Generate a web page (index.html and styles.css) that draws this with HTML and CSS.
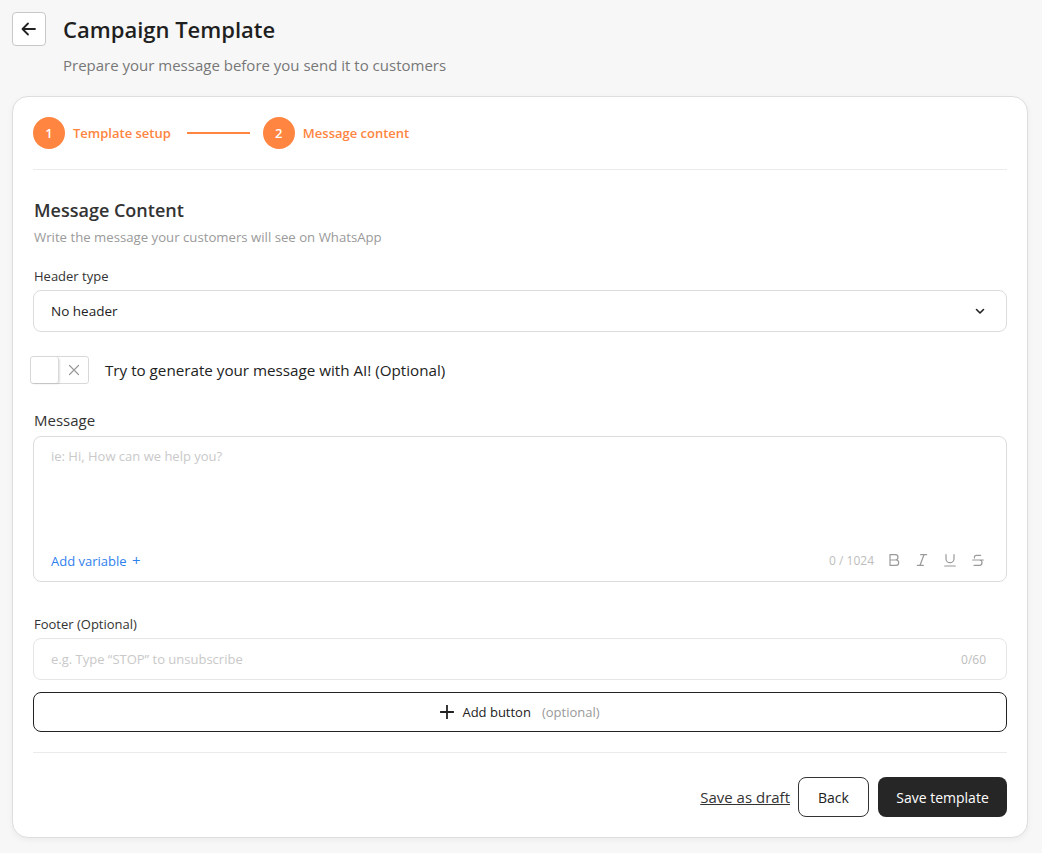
FILE: index.html
```html
<!DOCTYPE html>
<html lang="en">
<head>
  <meta charset="UTF-8" />
  <meta name="viewport" content="width=device-width,initial-scale=1.0" />
  <title>Campaign Template</title>
  <link rel="stylesheet" href="styles.css">
</head>
<body>
  <header class="page-head">
    <button class="back-btn" type="button" aria-label="Back">
      <svg width="20" height="20" viewBox="0 0 20 20" fill="none" stroke="#222" stroke-width="1.8" stroke-linecap="round" stroke-linejoin="round">
        <path d="M16 10H4M9 4.5L3.5 10L9 15.5" />
      </svg>
    </button>
    <div class="head-text">
      <h1>Campaign Template</h1>
      <p class="sub">Prepare your message before you send it to customers</p>
    </div>
  </header>

  <main class="card">
    <div class="stepper">
      <div class="step"><span class="num">1</span><span class="step-label">Template setup</span></div>
      <span class="step-line"></span>
      <div class="step"><span class="num">2</span><span class="step-label">Message content</span></div>
    </div>

    <section class="content">
      <h2>Message Content</h2>
      <p class="hint">Write the message your customers will see on WhatsApp</p>

      <label class="field-label">Header type</label>
      <div class="select">
        <span>No header</span>
        <svg width="12" height="12" viewBox="0 0 12 12" fill="none" stroke="#222" stroke-width="1.6" stroke-linecap="round" stroke-linejoin="round">
          <path d="M2.5 4.5L6 8L9.5 4.5" />
        </svg>
      </div>

      <div class="ai-row">
        <div class="toggle">
          <span class="knob"></span>
          <span class="off">
            <svg width="12" height="12" viewBox="0 0 12 12" stroke="#9a9a9a" stroke-width="1.2" stroke-linecap="round">
              <path d="M1.5 1.5L10.5 10.5M10.5 1.5L1.5 10.5" />
            </svg>
          </span>
        </div>
        <span class="ai-text">Try to generate your message with AI! (Optional)</span>
      </div>

      <label class="field-label big">Message</label>
      <div class="textarea">
        <span class="placeholder">ie: Hi, How can we help you?</span>
        <div class="ta-foot">
          <a class="add-var" href="#">Add variable <span class="plus">+</span></a>
          <div class="tools">
            <span class="count">0 / 1024</span>
            <svg class="tool" width="16" height="16" viewBox="0 0 24 24" fill="none" stroke="#9a9a9a" stroke-width="1.8" stroke-linecap="round" stroke-linejoin="round">
              <path d="M6 12h9a4 4 0 0 1 0 8H6V4h8a4 4 0 0 1 0 8" />
            </svg>
            <svg class="tool" width="16" height="16" viewBox="0 0 24 24" fill="none" stroke="#9a9a9a" stroke-width="1.8" stroke-linecap="round">
              <path d="M19 4h-9M14 20H5M15 4L9 20" />
            </svg>
            <svg class="tool" width="16" height="16" viewBox="0 0 24 24" fill="none" stroke="#9a9a9a" stroke-width="1.8" stroke-linecap="round">
              <path d="M6 4v6a6 6 0 0 0 12 0V4M4 21h16" />
            </svg>
            <svg class="tool" width="16" height="16" viewBox="0 0 24 24" fill="none" stroke="#9a9a9a" stroke-width="1.8" stroke-linecap="round">
              <path d="M16 5H9.5a3 3 0 0 0-2.8 4M14 12a4 4 0 0 1 0 8H6M4 12h16" />
            </svg>
          </div>
        </div>
      </div>

      <label class="field-label footer-label">Footer (Optional)</label>
      <div class="input">
        <span class="placeholder">e.g. Type “STOP” to unsubscribe</span>
        <span class="count">0/60</span>
      </div>

      <button class="add-btn" type="button">
        <svg width="14" height="14" viewBox="0 0 14 14" stroke="#222" stroke-width="1.8" stroke-linecap="square">
          <path d="M7 1V13M1 7H13" />
        </svg>
        Add button <span class="opt">(optional)</span>
      </button>
    </section>

    <div class="actions">
      <a class="draft" href="#">Save as draft</a>
      <button class="btn ghost" type="button">Back</button>
      <button class="btn dark" type="button">Save template</button>
    </div>
  </main>
</body>
</html>
```

FILE: styles.css
```css
body {
  background: #f7f7f7;
  color: #222;
  font-family: 'Open Sans', 'Noto Sans', Arial, sans-serif;
  margin: 0;
  padding: 12px 14px 16px 12px;
}
.page-head {
  display: flex;
  gap: 17px;
  align-items: flex-start;
}
.back-btn {
  width: 34px;
  height: 34px;
  border: 1px solid #c8c8c8;
  border-radius: 4px;
  background: #fff;
  display: flex;
  align-items: center;
  justify-content: center;
  padding: 0;
}
h1 {
  font-size: 22px;
  font-weight: 600;
  margin: 2px 0 0;
  line-height: 30px;
  color: #1f1f1f;
}
.sub {
  margin: 10px 0 0;
  font-size: 15px;
  color: #777;
  line-height: 22px;
}
.card {
  margin-top: 20px;
  background: #fff;
  border: 1px solid #dedede;
  border-radius: 16px;
  box-shadow: 0 2px 6px rgba(0,0,0,0.05);
  padding: 20px 20px 20px 20px;
}
.stepper {
  display: flex;
  align-items: center;
  padding-bottom: 20px;
  border-bottom: 1px solid #ebebeb;
}
.step {
  display: flex;
  align-items: center;
  gap: 8px;
}
.num {
  width: 32px;
  height: 32px;
  border-radius: 50%;
  background: #ff8540;
  color: #fff;
  font-size: 13px;
  font-weight: 600;
  display: flex;
  align-items: center;
  justify-content: center;
}
.step-label {
  color: #ff8540;
  font-size: 13px;
  font-weight: 600;
}
.step-line {
  width: 63px;
  height: 2px;
  background: #ff8540;
  margin: 0 13px 0 16px;
}
.content {
  padding-top: 28px;
  padding-bottom: 20px;
  border-bottom: 1px solid #ebebeb;
}
h2 {
  font-size: 18px;
  font-weight: 600;
  margin: 0 0 0 1px;
  color: #333;
  line-height: 24px;
}
.hint {
  margin: 6px 0 0 1px;
  font-size: 13.2px;
  color: #9a9a9a;
}
.field-label {
  display: block;
  font-size: 13px;
  color: #333;
  margin: 21px 0 5px 1px;
  line-height: 18px;
}
.field-label.big {
  font-size: 15px;
  margin: 26px 0 6px 1px;
  line-height: 20px;
}
.footer-label {
  margin-top: 33px;
  margin-bottom: 5px;
}
.select, .input {
  height: 40px;
  border: 1px solid #dcdcdc;
  border-radius: 8px;
  display: flex;
  align-items: center;
  justify-content: space-between;
  padding: 0 20px 0 17px;
  font-size: 13.5px;
}
.select span {
  color: #222;
}
.input {
  border-color: #e6e6e6;
}
.ai-row {
  display: flex;
  align-items: center;
  gap: 16px;
  margin: 24px 0 0 -3px;
}
.toggle {
  width: 57px;
  height: 26px;
  border: 1px solid #d8d8d8;
  border-radius: 3px;
  display: flex;
}
.knob {
  width: 27px;
  height: 26px;
  border-right: 1px solid #d8d8d8;
  box-shadow: 1px 1px 2px rgba(0,0,0,0.12);
  border-radius: 3px;
}
.off {
  flex: 1;
  display: flex;
  align-items: center;
  justify-content: center;
}
.ai-text {
  font-size: 15.2px;
  color: #222;
}
.textarea {
  height: 146px;
  box-sizing: border-box;
  border: 1px solid #dcdcdc;
  border-radius: 8px;
  padding: 10px 17px 11px;
  display: flex;
  flex-direction: column;
  justify-content: space-between;
}
.placeholder {
  color: #c9c9c9;
  font-size: 13px;
}
.ta-foot {
  display: flex;
  justify-content: space-between;
  align-items: center;
}
.add-var {
  color: #2f80ed;
  font-size: 13px;
  text-decoration: none;
}
.plus {
  font-size: 15px;
  margin-left: 2px;
}
.tools {
  display: flex;
  align-items: center;
  gap: 12px;
  margin-right: 3px;
}
.count {
  color: #bdbdbd;
  font-size: 12px;
}
.tools .count {
  margin-right: 0;
}
.add-btn {
  width: 100%;
  height: 40px;
  margin-top: 12px;
  border: 1px solid #222;
  border-radius: 8px;
  background: #fff;
  font-family: inherit;
  font-size: 13px;
  color: #222;
  display: flex;
  align-items: center;
  justify-content: center;
  gap: 8px;
}
.opt {
  color: #999;
  margin-left: 3px;
}
.actions {
  display: flex;
  justify-content: flex-end;
  align-items: center;
  gap: 8px;
  padding-top: 24px;
}
.draft {
  color: #333;
  font-size: 15px;
  text-decoration: underline;
}
.btn {
  height: 40px;
  border-radius: 8px;
  font-family: inherit;
  font-size: 14px;
}
.ghost {
  width: 71px;
  border: 1px solid #333;
  background: #fff;
  color: #222;
}
.dark {
  width: 129px;
  border: none;
  background: #262626;
  color: #fff;
  margin-left: 1px;
}
```
